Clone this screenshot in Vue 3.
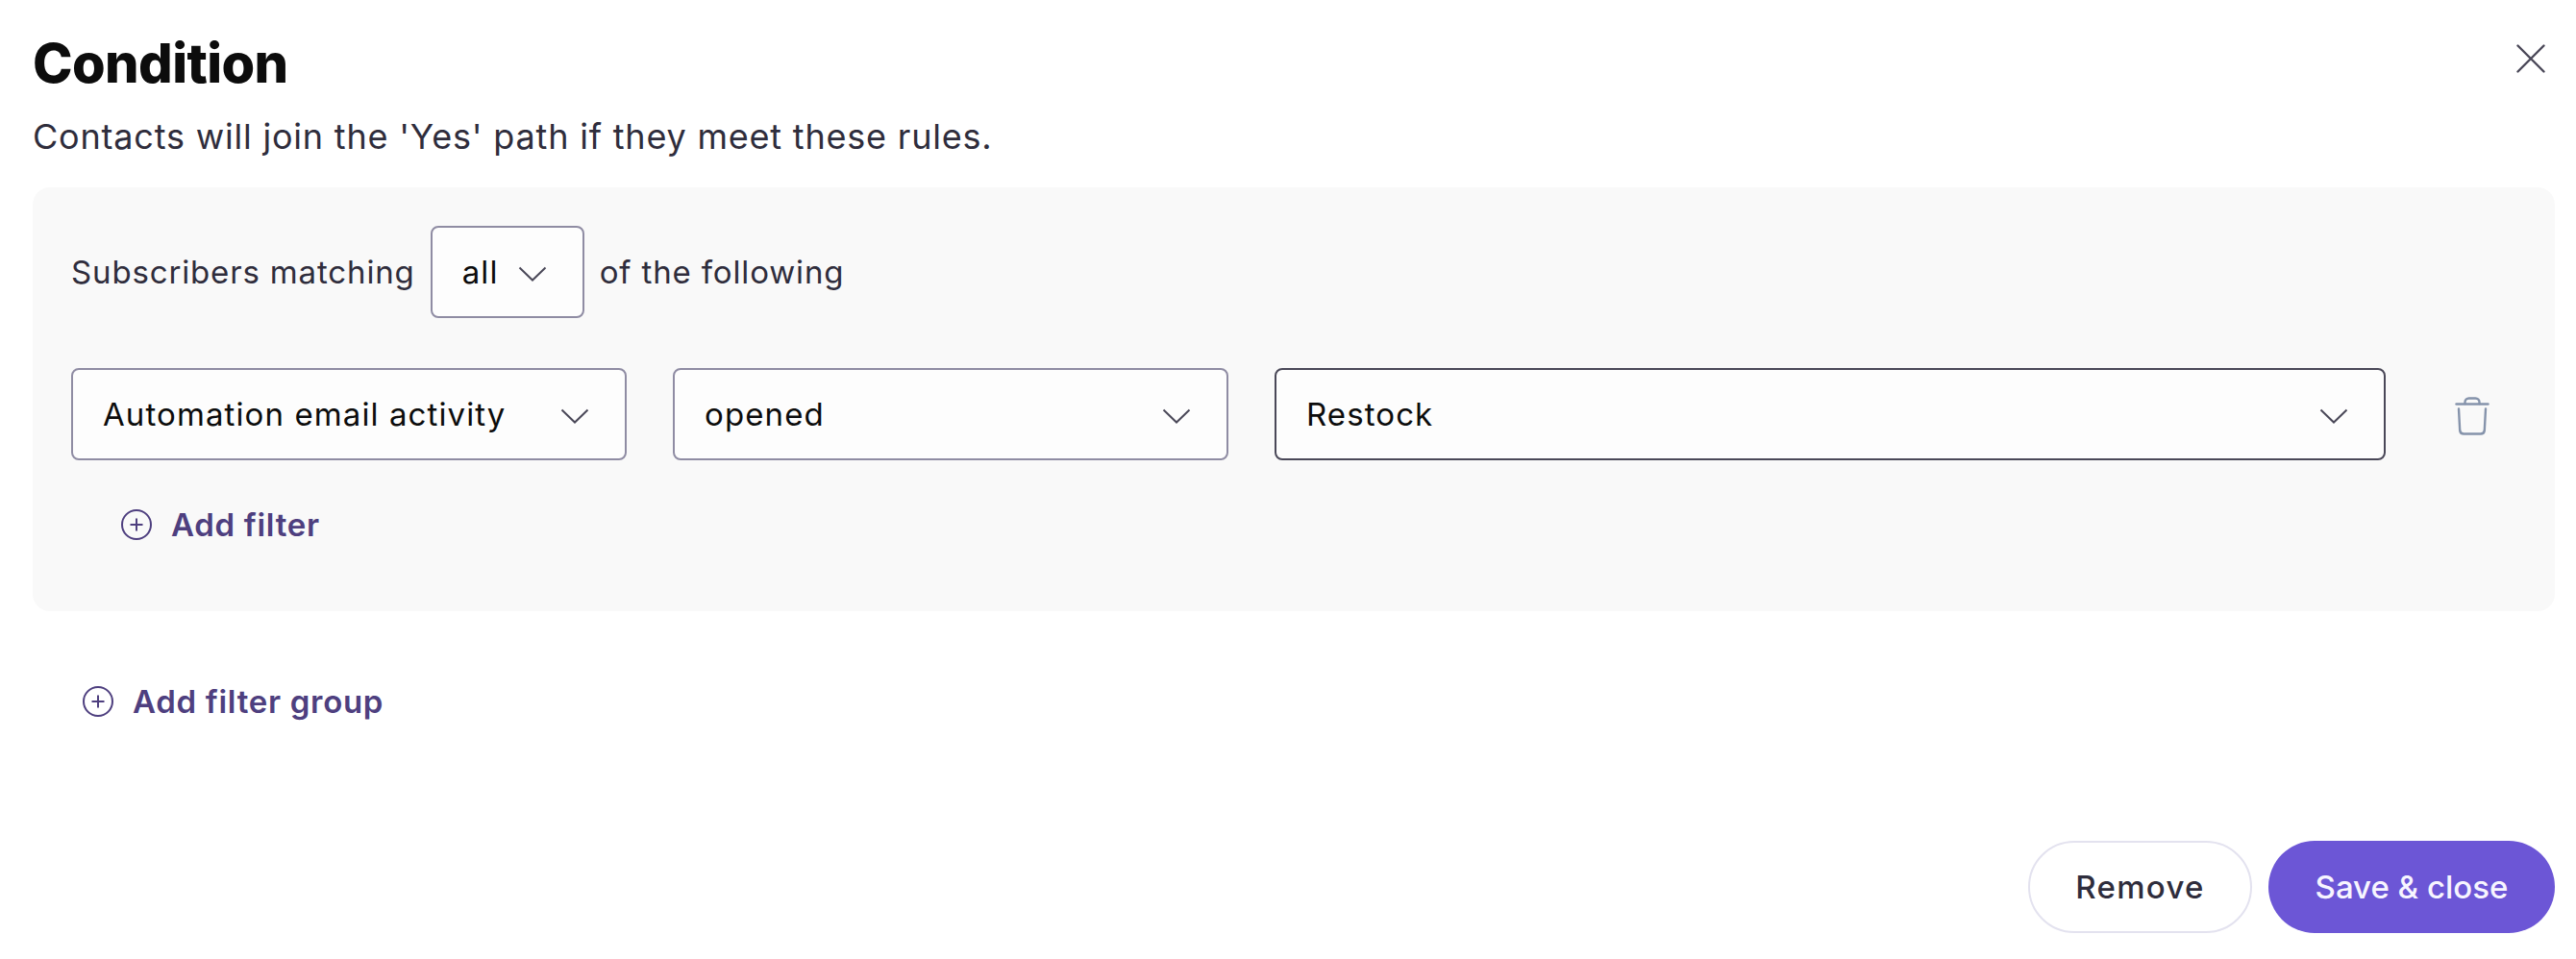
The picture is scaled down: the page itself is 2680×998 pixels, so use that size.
<script setup>
const filters = [
  { label: 'Automation email activity', cls: 'w1' },
  { label: 'opened', cls: 'w1' },
  { label: 'Restock', cls: 'grow active' }
]
</script>

<template>
  <div class="page">
    <header class="head">
      <div>
        <h1 class="title">Condition</h1>
        <p class="sub">Contacts will join the 'Yes' path if they meet these rules.</p>
      </div>
      <button class="close" aria-label="Close">
        <svg width="30" height="30" viewBox="0 0 30 30"><path d="M1.500 1.500l27 27M28.500 1.500l-27 27" fill="none" stroke="#4a4858" stroke-width="2.4" stroke-linecap="round"/></svg>
      </button>
    </header>

    <section class="panel">
      <div class="match">
        <span>Subscribers matching</span>
        <div class="select small">
          <span class="val">all</span>
          <svg class="chev" width="30" height="16" viewBox="0 0 30 16"><path d="M1.500 1.500L15 14.500 28.500 1.500" fill="none" stroke="#4a4858" stroke-width="2"/></svg>
        </div>
        <span>of the following</span>
      </div>
      <div class="row">
        <div v-for="f in filters" :key="f.label" class="select" :class="f.cls">
          <span class="val">{{ f.label }}</span>
          <svg class="chev" width="30" height="16" viewBox="0 0 30 16"><path d="M1.500 1.500L15 14.500 28.500 1.500" fill="none" stroke="#4a4858" stroke-width="2"/></svg>
        </div>
        <svg class="trash" width="36" height="42" viewBox="0 0 36 42" fill="none" stroke="#8593ab" stroke-width="2.4" stroke-linecap="round" stroke-linejoin="round">
          <path d="M1.500 8.500h33"/>
          <path d="M4 13.500l1.200 22.500a4 4 0 0 0 4 3.500h17.600a4 4 0 0 0 4-3.500L32 13.500"/>
          <path d="M10.500 8V6.500a4 4 0 0 1 4-4h7a4 4 0 0 1 4 4V8"/>
        </svg>
      </div>
      <a class="add inner">
        <svg width="32" height="32" viewBox="0 0 32 32" fill="none" stroke="#4e3f7f" stroke-width="2"><circle cx="16" cy="16" r="15"/><path d="M16 9.500v13M9.500 16h13"/></svg>
        <span>Add filter</span>
      </a>
    </section>

    <a class="add outer">
      <svg width="32" height="32" viewBox="0 0 32 32" fill="none" stroke="#4e3f7f" stroke-width="2"><circle cx="16" cy="16" r="15"/><path d="M16 9.500v13M9.500 16h13"/></svg>
      <span>Add filter group</span>
    </a>

    <footer class="foot">
      <button class="btn ghost">Remove</button>
      <button class="btn primary">Save &amp; close</button>
    </footer>
  </div>
</template>

<style>
html, body { margin: 0; background: #fff; }
</style>

<style scoped>
.page {
  width: 2680px;
  height: 998px;
  box-sizing: border-box;
  padding: 0 22px 27px 34px;
  display: flex;
  flex-direction: column;
  font-family: Inter, "Liberation Sans", sans-serif;
  color: #2f2d3c;
  overflow: hidden;
}
.head { display: flex; justify-content: space-between; align-items: flex-start; height: 195px; }
.title { margin: 32px 0 0; font-size: 56px; line-height: 68px; font-weight: 800; color: #0c0c0c; letter-spacing: -0.6px; }
.sub { margin: 20px 0 0; font-size: 36px; line-height: 44px; font-weight: 400; letter-spacing: 0.8px; }
.close { background: none; border: 0; padding: 0; margin: 46px 10px 0 0; line-height: 0; }
.panel {
  background: #f9f9f9;
  border-radius: 18px;
  height: 441px;
  box-sizing: border-box;
  padding: 40px 40px 0;
  display: flex;
  flex-direction: column;
}
.match { display: flex; align-items: center; gap: 16px; font-size: 33px; letter-spacing: 0.85px; height: 96px; }
.row { display: flex; align-items: center; gap: 48px; margin-top: 52px; }
.select {
  box-sizing: border-box;
  height: 96px;
  background: #fdfdfd;
  border: 2px solid #8f8ca3;
  border-radius: 8px;
  padding: 0 37px 0 31px;
  display: flex;
  align-items: center;
  justify-content: space-between;
  font-size: 33px;
  letter-spacing: 1.1px;
  color: #0c0c0c;
}
.small { width: 160px; }
.w1 { width: 578px; }
.grow { width: 1156px; }
.active { border-color: #4a4858; }
.chev { flex: none; margin-top: 4px; }
.trash { margin: 4px 0 0 24px; }
.add { display: flex; align-items: center; gap: 20px; font-size: 33px; font-weight: 600; letter-spacing: 0.7px; color: #4e3f7f; }
.inner { margin: 49px 0 0 52px; height: 36px; }
.outer { margin: 76px 0 0 52px; height: 36px; }
.foot { margin-top: auto; display: flex; justify-content: flex-end; gap: 17px; }
.btn { height: 96px; border-radius: 48px; font: inherit; font-size: 33px; font-weight: 500; box-sizing: border-box; }
.ghost { width: 233px; background: #fff; border: 2px solid #e3e2ef; color: #2f2d3c; letter-spacing: 1.3px; }
.primary { width: 298px; background: #6c56d6; border: 0; color: #f7f5ff; }
</style>
